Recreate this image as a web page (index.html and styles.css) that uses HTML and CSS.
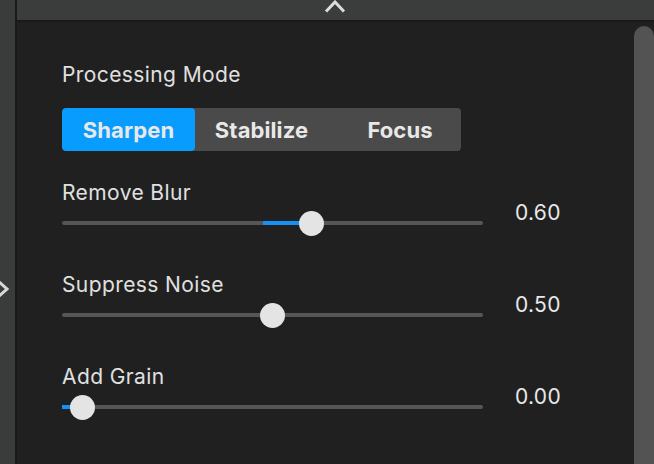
FILE: index.html
```html
<!DOCTYPE html>
<html>
<head>
<meta charset="utf-8">
<link rel="stylesheet" href="styles.css">
</head>
<body>
<div class="app">
  <div class="side">
    <svg class="side-chev" width="10" height="20" viewBox="0 0 10 20"><path d="M-2 2 L7 10 L-2 18" fill="none" stroke="#d8d8d8" stroke-width="3"/></svg>
  </div>
  <div class="main">
    <div class="topbar">
      <svg class="top-chev" width="24" height="14" viewBox="0 0 24 14"><path d="M3 12.5 L12 3 L21 12.5" fill="none" stroke="#dcdcdc" stroke-width="3"/></svg>
    </div>
    <div class="body">
      <div class="content">
        <div class="label">Processing Mode</div>
        <div class="seg">
          <div class="seg-btn active">Sharpen</div>
          <div class="seg-btn">Stabilize</div>
          <div class="seg-btn last">Focus</div>
        </div>

        <div class="slider">
          <div class="label">Remove Blur</div>
          <div class="track">
            <div class="fill" style="left:201px;width:40px"></div>
            <div class="thumb" style="left:249px"></div>
          </div>
          <div class="value">0.60</div>
        </div>

        <div class="slider">
          <div class="label">Suppress Noise</div>
          <div class="track">
            <div class="thumb" style="left:210px"></div>
          </div>
          <div class="value">0.50</div>
        </div>

        <div class="slider">
          <div class="label">Add Grain</div>
          <div class="track">
            <div class="fill" style="left:0px;width:14px"></div>
            <div class="thumb" style="left:20px"></div>
          </div>
          <div class="value">0.00</div>
        </div>
      </div>
      <div class="scrollbar"></div>
    </div>
  </div>
</div>
</body>
</html>
```

FILE: styles.css
```css
html, body {
  margin: 0;
  padding: 0;
  background: #202020;
  font-family: Inter, "Noto Sans", sans-serif;
  color: #e2e2e2;
}
.app {
  display: flex;
  width: 654px;
  height: 464px;
  overflow: hidden;
}
.side {
  width: 15px;
  flex: none;
  background: #3a3c3b;
  border-right: 2px solid #1a1a1a;
  padding-top: 279px;
  box-sizing: content-box;
}
.side-chev {
  display: block;
}
.main {
  flex: 1;
  display: flex;
  flex-direction: column;
  min-width: 0;
}
.topbar {
  height: 20px;
  flex: none;
  background: #3b3d3c;
  border-bottom: 2px solid #181918;
  display: flex;
  justify-content: center;
  align-items: flex-start;
  overflow: hidden;
}
.top-chev {
  display: block;
  margin-top: -1px;
  margin-left: -1px;
}
.body {
  flex: 1;
  display: flex;
}
.content {
  flex: 1;
  padding: 42px 0 0 45px;
}
.label {
  font-size: 21px;
  line-height: 22px;
  color: #e0e0e0;
  letter-spacing: 0.4px;
  white-space: nowrap;
}
.seg {
  margin-top: 22px;
  width: 399px;
  height: 43px;
  display: grid;
  grid-template-columns: 133px 133px 133px;
  background: #4a4a4a;
  border-radius: 4px;
  overflow: hidden;
}
.seg-btn {
  display: flex;
  align-items: center;
  justify-content: center;
  font-weight: 700;
  font-size: 22px;
  letter-spacing: 0.1px;
  color: #e8e8e8;
}
.seg-btn.last {
  padding-left: 11px;
}
.seg-btn.active {
  background: #099cff;
  border-radius: 4px;
}
.slider {
  margin-top: 29px;
  display: grid;
  grid-template-columns: 421px auto;
  column-gap: 32px;
}
.slider + .slider {
  margin-top: 36px;
}
.slider .label {
  grid-column: 1;
  grid-row: 1;
  margin-top: 2px;
}
.track {
  grid-column: 1;
  grid-row: 2;
  margin-top: 6px;
  height: 26px;
  position: relative;
}
.track::before {
  content: "";
  position: absolute;
  left: 0;
  right: 0;
  top: 11px;
  height: 4px;
  border-radius: 2px;
  background: #565656;
}
.fill {
  position: absolute;
  top: 11px;
  height: 4px;
  background: #1591f5;
}
.thumb {
  position: absolute;
  top: 0.5px;
  width: 25px;
  height: 25px;
  margin-left: -12.5px;
  border-radius: 50%;
  background: #e4e4e4;
}
.value {
  grid-column: 2;
  grid-row: 1 / 3;
  align-self: end;
  margin-bottom: 12px;
  font-size: 21px;
  line-height: 22px;
  letter-spacing: 0.3px;
  color: #e8e8e8;
}
.scrollbar {
  width: 20px;
  flex: none;
  margin-top: 4px;
  background: #535353;
  border-radius: 10px 10px 0 0;
}
```
